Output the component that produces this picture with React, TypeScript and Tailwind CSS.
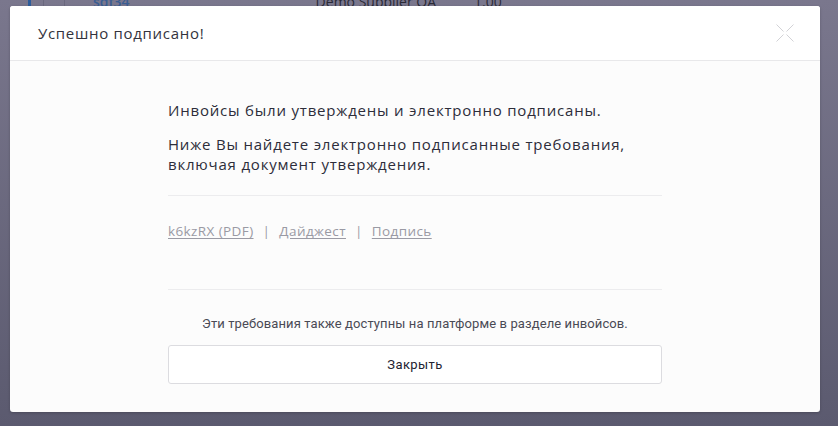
export default function App() {
  return (
    <div className="relative h-[426px] w-[838px] overflow-hidden bg-gradient-to-b from-[#7a778d] to-[#5b5a6f] font-['Open_Sans',sans-serif]">
      {/* table row behind the overlay */}
      <div className="-mt-[6px] flex h-[16px] items-start text-[14px] leading-[16px]">
        <div className="ml-[28px] h-[16px] w-[3px] bg-[#2c5c9a]" />
        <div className="ml-[12px] h-[16px] w-px bg-[#6a687e]" />
        <div className="ml-[20px] h-[16px] w-px bg-[#6a687e]" />
        <span className="ml-[28px] font-semibold text-[#3a5d92]">sdf34</span>
        <span className="ml-[186px] text-[#2a2a36]">Demo Supplier OA</span>
        <span className="ml-[38px] text-[#2a2a36]">1.00</span>
      </div>

      {/* modal */}
      <div className="absolute left-[10px] top-[6px] flex h-[406px] w-[810px] flex-col overflow-hidden rounded-[3px] bg-[#fcfcfc] shadow-[0_1px_3px_rgba(0,0,0,0.2)]">
        <div className="flex h-[55px] shrink-0 items-center justify-between border-b border-[#e8e8ea] bg-white pl-[28px] pr-[26px]">
          <h1 className="text-[15px] tracking-[0.7px] text-[#33333d]">
            Успешно подписано!
          </h1>
          <svg
            viewBox="0 0 18 18"
            className="h-[18px] w-[18px]"
            fill="none"
            stroke="#d2d2d6"
            strokeWidth={1}
          >
            <line x1="0.5" y1="0.5" x2="7.5" y2="7.5" />
            <line x1="17.5" y1="0.5" x2="10.5" y2="7.5" />
            <line x1="0.5" y1="17.5" x2="7.5" y2="10.5" />
            <line x1="17.5" y1="17.5" x2="10.5" y2="10.5" />
          </svg>
        </div>

        <div className="mx-auto flex w-[494px] flex-col pt-[39px]">
          <p className="text-[15px] leading-[20px] tracking-[0.8px] text-[#2d2d3a]">
            Инвойсы были утверждены и электронно подписаны.
          </p>
          <p className="mt-[14px] text-[15px] leading-[20px] tracking-[0.8px] text-[#2d2d3a]">
            Ниже Вы найдете электронно подписанные требования, включая документ
            утверждения.
          </p>

          <div className="mt-[21px] h-px bg-[#ececee]" />

          <div className="mt-[25px] flex items-center text-[13.5px] tracking-[0.4px] text-[#9a9aa4]">
            <a className="underline underline-offset-2">k6kzRX (PDF)</a>
            <span className="mx-[9px]">|</span>
            <a className="underline underline-offset-2">Дайджест</a>
            <span className="mx-[9px]">|</span>
            <a className="underline underline-offset-2">Подпись</a>
          </div>

          <div className="mt-[48px] h-px bg-[#ececee]" />

          <p className="mt-[24px] text-center font-['Roboto',sans-serif] text-[13px] tracking-[0.1px] text-[#4a4a55]">
            Эти требования также доступны на платформе в разделе инвойсов.
          </p>

          <button className="mt-[11px] h-[39px] rounded-[3px] border border-[#dcdce0] bg-white font-['Roboto',sans-serif] text-[13px] tracking-[0.4px] text-[#222230]">
            Закрыть
          </button>
        </div>
      </div>
    </div>
  );
}
